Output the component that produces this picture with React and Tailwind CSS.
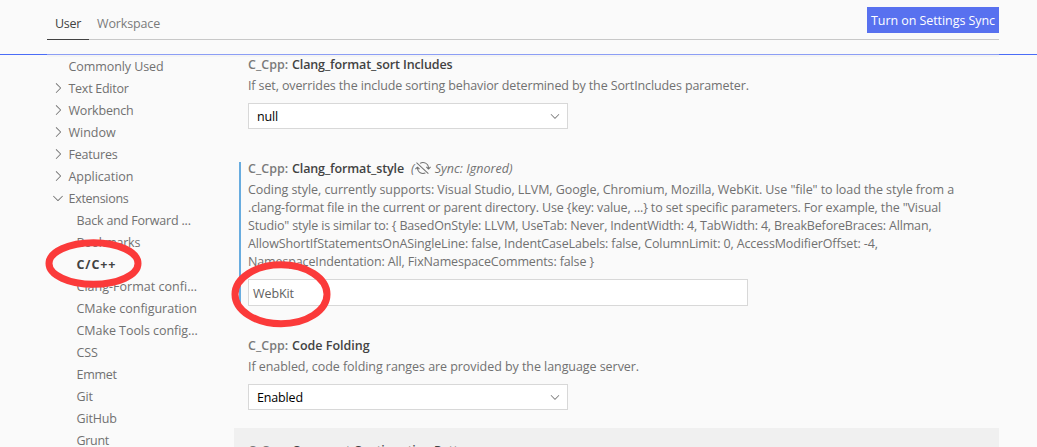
import React from 'react';
import { VscChevronDown, VscChevronRight, VscSyncIgnored } from 'react-icons/vsc';

const groups = [
  { label: 'Commonly Used', tracking: 'tracking-[-0.08px]' },
  { label: 'Text Editor', icon: 'right', tracking: 'tracking-[-0.27px]' },
  { label: 'Workbench', icon: 'right', tracking: 'tracking-[-0.19px]' },
  { label: 'Window', icon: 'right', tracking: 'tracking-[-0.03px]' },
  { label: 'Features', icon: 'right', tracking: 'tracking-[-0.2px]' },
  { label: 'Application', icon: 'right', tracking: 'tracking-[-0.03px]' },
  { label: 'Extensions', icon: 'down', tracking: 'tracking-[-0.29px]' },
];

const extensions = [
  { label: 'Back and Forward ...', style: 'tracking-[-0.18px]' },
  { label: 'Bookmarks', style: 'tracking-[-0.25px]' },
  { label: 'C/C++', style: 'font-bold text-[#424242] tracking-[0.9px]' },
  { label: 'Clang-Format confi...', style: 'tracking-[0.02px]' },
  { label: 'CMake configuration', style: 'tracking-[-0.02px]' },
  { label: 'CMake Tools config...', style: 'tracking-[-0.05px]' },
  { label: 'CSS', style: 'tracking-[-0.1px]' },
  { label: 'Emmet', style: 'tracking-[-0.25px]' },
  { label: 'Git', style: 'tracking-[-0.1px]' },
  { label: 'GitHub', style: 'tracking-[-0.15px]' },
  { label: 'Grunt', style: 'tracking-[-0.3px]' },
];

function Title({ children, className = '', extra }) {
  return (
    <div className="flex h-[18px] items-center pt-0.5 font-semibold text-[#424242]">
      <span className="w-11 text-[#7a7a7a]">C_Cpp:</span>
      <span className={className}>{children}</span>
      {extra}
    </div>
  );
}

function Select({ children }) {
  return (
    <div className="flex h-[26px] w-80 items-center justify-between border border-[#d8d8d8] bg-white pl-2 pr-[5px] text-black">
      <span className="pt-px tracking-[-0.15px]">{children}</span>
      <VscChevronDown className="size-[14px] text-[#777777]" />
    </div>
  );
}

export default function App() {
  return (
    <div className="relative flex h-[447px] w-[1037px] flex-col overflow-hidden whitespace-pre bg-[#fafafa] font-['Open_Sans',sans-serif] text-[12.5px] leading-[18px] text-[#717171]">
      <header className="flex h-[54px] shrink-0 flex-col">
        <div className="ml-[47px] flex h-10 w-[952px] border-b border-[#c8c8c8]">
          <div className="mt-[7px] flex h-[33px] w-[42px] justify-center border-b border-[#424242] pt-2 tracking-[-0.3px] text-[#424242]">User</div>
          <div className="ml-2 pt-[15px] tracking-[-0.14px] text-[#7b7b7b]">Workspace</div>
          <div className="ml-auto mt-[7px] flex h-[26px] w-[132px] items-center justify-center bg-[#5871ef] pt-0.5 tracking-[-0.07px] text-white">Turn on Settings Sync</div>
        </div>
      </header>
      <div className="flex h-px shrink-0 bg-[#4a6cf7]">
        <div className="ml-[47px] w-[952px] bg-[#8c9ef5]" />
      </div>
      <div className="flex min-h-0 grow pl-[47px]">
        <nav className="w-[187px] border-t-2 border-[#f4f4f4]">
          <div className="-mt-px">
            {groups.map((g) => (
              <div key={g.label} className="flex h-[22px] items-center">
                <span className="flex w-[21.5px] pl-[3px]">
                  {g.icon === 'right' && <VscChevronRight className="size-4 -translate-y-px text-[#717171]" />}
                  {g.icon === 'down' && <VscChevronDown className="size-4 -translate-y-px text-[#717171]" />}
                </span>
                <span className={g.tracking}>{g.label}</span>
              </div>
            ))}
            {extensions.map((e) => (
              <div key={e.label} className="flex h-[22px] items-center pl-[29.5px]">
                <span className={e.style}>{e.label}</span>
              </div>
            ))}
          </div>
        </nav>
        <main className="w-[765px] border-t-2 border-[#f4f4f4]">
          <section className="-mt-[2px] ml-[14px] h-[107px]">
            <Title className="tracking-[-0.12px]">Clang_format_sort Includes</Title>
            <p className="mt-1 tracking-[-0.118px]">If set, overrides the include sorting behavior determined by the SortIncludes parameter.</p>
            <div className="mt-2"><Select>null</Select></div>
          </section>
          <section className="ml-[5px] flex h-[144px] flex-col border-l-2 border-[#68acdf] pl-[7px]">
            <div className="-mt-[3px]">
              <Title
                className="tracking-[-0.12px]"
                extra={
                  <span className="ml-[7px] flex items-center font-normal italic text-[#717171]">
                    (<VscSyncIgnored className="size-4 -translate-y-px" />
                    <span className="ml-1 tracking-[0.05px]">Sync: Ignored)</span>
                  </span>
                }
              >
                Clang_format_style
              </Title>
            </div>
            <div className="mt-1">
              <p className="tracking-[-0.06px]">Coding style, currently supports: Visual Studio, LLVM, Google, Chromium, Mozilla, WebKit. Use "file" to load the style from a</p>
              <p className="tracking-[-0.13px]">.clang-format file in the current or parent directory. Use {'{'}key: value, ...{'}'} to set specific parameters. For example, the "Visual</p>
              <p className="tracking-[-0.172px]">Studio" style is similar to: {'{'} BasedOnStyle: LLVM, UseTab: Never, IndentWidth: 4, TabWidth: 4, BreakBeforeBraces: Allman,</p>
              <p className="tracking-[-0.127px]">AllowShortIfStatementsOnASingleLine: false, IndentCaseLabels: false, ColumnLimit: 0, AccessModifierOffset: -4,</p>
              <p className="tracking-[-0.134px]">NamespaceIndentation: All, FixNamespaceComments: false {'}'}</p>
            </div>
            <div className="mt-2 flex h-[27px] w-[500px] shrink-0 items-center border border-[#d8d8d8] bg-white pl-1 pt-0.5 tracking-[-0.08px] text-[#616161]">WebKit</div>
          </section>
          <section className="ml-[14px] mt-[30px] h-[92px]">
            <Title>Code Folding</Title>
            <p className="mt-1 tracking-[-0.06px]">If enabled, code folding ranges are provided by the language server.</p>
            <div className="mt-2"><Select>Enabled</Select></div>
          </section>
          <section className="h-[60px] bg-[#f0f0f0] pl-[14px] pt-[13px]">
            <Title className="tracking-[-0.15px]">Comment Continuation Patterns</Title>
          </section>
        </main>
      </div>
      <svg className="pointer-events-none absolute inset-0" width="1037" height="447" fill="none" stroke="#fb3a3a" strokeWidth="7">
        <ellipse cx="93.5" cy="263.5" rx="44.5" ry="20.8" />
        <ellipse cx="281" cy="294.3" rx="46" ry="29.5" />
      </svg>
    </div>
  );
}
